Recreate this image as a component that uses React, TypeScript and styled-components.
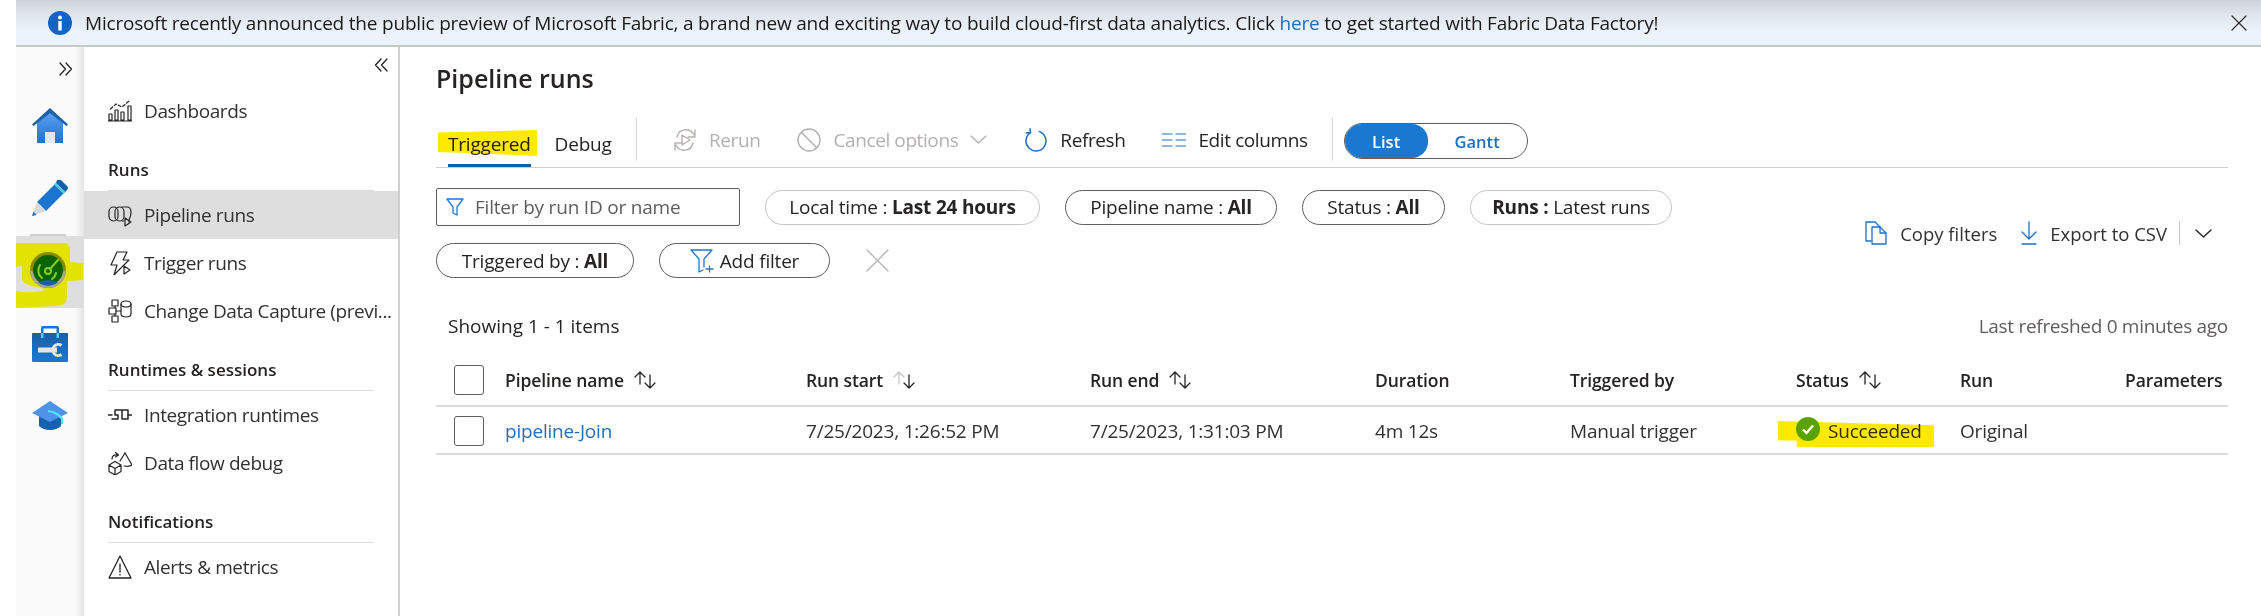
import { ReactNode } from "react";
import styled, { createGlobalStyle } from "styled-components";

const GlobalStyle = createGlobalStyle`
    html, body {
        margin: 0;
        padding: 0;
        background: #fff;
    }
    body {
        font-family: "Open Sans", "Noto Sans", "Liberation Sans", sans-serif;
        color: #252423;
    }
    * {
        box-sizing: border-box;
    }
`;

const Page = styled.div`
    width: 2261px;
    height: 616px;
    padding-left: 16px;
    display: flex;
    flex-direction: column;
    overflow: hidden;
    background: #fff;
`;

const Banner = styled.div`
    height: 47px;
    flex: none;
    display: flex;
    align-items: center;
    padding: 0 14px 0 32px;
    background: linear-gradient(#cdd2da 0, #dfe5ec 14px, #ebf3fc 32px);
    border-bottom: 2px solid #c8c8c8;
    font-size: 19px;
    letter-spacing: -0.2px;
`;

const BannerText = styled.div`
    flex: 1;
    margin-left: 13px;
    color: #1b1a19;
    white-space: nowrap;
`;

const BannerLink = styled.span`
    color: #1f6fc0;
`;

const Body = styled.div`
    flex: 1;
    display: flex;
    min-height: 0;
`;

const Rail = styled.nav`
    width: 68px;
    flex: none;
    background: linear-gradient(90deg, #fbfbfb 0, #fbfbfb 58px, #e6e6e6 68px);
`;

const RailHead = styled.div`
    height: 43px;
    display: flex;
    justify-content: flex-end;
    align-items: center;
    padding: 0 11px 0 0;
`;

const RailTile = styled.div`
    height: 72px;
    display: flex;
    align-items: center;
    justify-content: center;
`;

const RailRule = styled.div`
    height: 2px;
    width: 36px;
    margin-left: 14px;
    background: #cfcfcf;
`;

const ActiveTile = styled.div`
    height: 72px;
    display: block;
    background: #dedede;
`;

const Side = styled.aside`
    width: 316px;
    flex: none;
    border-right: 2px solid #d0d0d0;
    background: #fff;
`;

const SideHead = styled.div`
    height: 40px;
    display: flex;
    justify-content: flex-end;
    align-items: center;
    padding: 0 10px 4px 0;
`;

const SectionHead = styled.div`
    height: 40px;
    margin: 16px 24px 0;
    padding-bottom: 2px;
    display: flex;
    align-items: center;
    font-size: 17px;
    font-weight: 600;
    color: #252423;
    border-bottom: 1px solid #dcdcdc;
`;

const SideItem = styled.div<{ $active?: boolean }>`
    height: 48px;
    display: flex;
    align-items: center;
    gap: 12px;
    padding: 0 0 0 24px;
    font-size: 19px;
    letter-spacing: -0.4px;
    color: #323130;
    background: ${(p) => (p.$active ? "#dedede" : "transparent")};
`;

const ItemLabel = styled.span`
    white-space: nowrap;
`;

const Main = styled.main`
    flex: 1;
    min-width: 0;
    padding: 11px 33px 0 36px;
`;

const Title = styled.h1`
    margin: 0;
    height: 40px;
    display: flex;
    align-items: center;
    font-size: 25px;
    font-weight: 600;
    color: #252423;
`;

const TabBar = styled.div`
    margin-top: 20px;
    height: 50px;
    display: flex;
    align-items: stretch;
    border-bottom: 1px solid #d0d0d0;
`;

const Tabs = styled.div`
    display: flex;
    gap: 24px;
    padding-left: 12px;
    width: 200px;
`;

const Tab = styled.div<{ $active?: boolean }>`
    position: relative;
    height: 49px;
    padding-top: 13px;
    font-size: 19px;
    letter-spacing: -0.2px;
    color: #252423;
    border-bottom: 3px solid ${(p) => (p.$active ? "#1660a8" : "transparent")};
`;

const TabMarker = styled.span`
    position: absolute;
    left: -10px;
    top: 12px;
    width: 99px;
    height: 26px;
    background: #ffe900;
    mix-blend-mode: multiply;
    clip-path: polygon(0 10%, 100% 0, 100% 100%, 55% 92%, 0 85%);
`;

const Divider = styled.div`
    width: 1px;
    height: 43px;
    flex: none;
    background: #d6d6d6;
`;

const Tool = styled.div<{ $disabled?: boolean }>`
    display: flex;
    align-items: center;
    gap: 12px;
    height: 43px;
    font-size: 19px;
    letter-spacing: -0.4px;
    white-space: nowrap;
    color: ${(p) => (p.$disabled ? "#b4b2b0" : "#252423")};
`;

const ToolGroup = styled.div`
    display: flex;
    gap: 37px;
    padding-left: 36px;
    padding-right: 24px;
`;

const ViewToggle = styled.div`
    margin: 5px 0 0 11px;
    width: 184px;
    height: 36px;
    display: flex;
    border: 1px solid #605e5c;
    border-radius: 18px;
    font-size: 16.5px;
    font-weight: 600;
    overflow: hidden;
`;

const ToggleOption = styled.div<{ $on?: boolean }>`
    flex: ${(p) => (p.$on ? "0 0 83px" : "1")};
    display: flex;
    align-items: center;
    justify-content: center;
    border-radius: 0 16px 16px 0;
    background: ${(p) => (p.$on ? "#1b78d0" : "transparent")};
    color: ${(p) => (p.$on ? "#fff" : "#1f6fc0")};
`;

const FilterArea = styled.div`
    margin-top: 20px;
    display: flex;
    justify-content: space-between;
    align-items: center;
    height: 90px;
`;

const FilterLeft = styled.div`
    display: flex;
    flex-direction: column;
    gap: 17px;
`;

const FilterRow = styled.div`
    display: flex;
    align-items: center;
    gap: 25px;
`;

const SearchBox = styled.div`
    width: 304px;
    height: 38px;
    display: flex;
    align-items: center;
    gap: 11px;
    padding-left: 9px;
    border: 1px solid #605e5c;
    border-radius: 2px;
    font-size: 19px;
    letter-spacing: -0.2px;
    color: #605e5c;
`;

const Pill = styled.div<{ $soft?: boolean; $w: number }>`
    width: ${(p) => p.$w}px;
    height: 35px;
    display: flex;
    align-items: center;
    justify-content: center;
    gap: 6px;
    border: 1px solid ${(p) => (p.$soft ? "#c8c6c4" : "#605e5c")};
    border-radius: 18px;
    font-size: 19px;
    letter-spacing: -0.2px;
    white-space: pre;
    color: #252423;

    b {
        font-weight: 700;
    }
`;

const ClearButton = styled.div`
    width: 45px;
    height: 35px;
    display: flex;
    align-items: center;
    justify-content: center;
`;

const Actions = styled.div`
    display: flex;
    align-items: center;
    padding-right: 16px;
    font-size: 18.5px;
    color: #323130;
`;

const Action = styled.div`
    display: flex;
    align-items: center;
    gap: 13px;
    margin-right: 24px;
    white-space: nowrap;
`;

const ActionRule = styled.div`
    width: 1px;
    height: 24px;
    margin: 0 15px 0 -12px;
    background: #c8c6c4;
`;

const InfoRow = styled.div`
    margin-top: 36px;
    display: flex;
    justify-content: space-between;
    align-items: center;
    padding-left: 12px;
    font-size: 19px;
    height: 24px;
`;

const Refreshed = styled.span`
    color: #605e5c;
    letter-spacing: -0.3px;
`;

const TableRow = styled.div<{ $head?: boolean }>`
    display: grid;
    grid-template-columns: 69px 301px 284px 285px 195px 226px 164px 165px 103px;
    align-items: center;
    height: ${(p) => (p.$head ? 69 : 48)}px;
    padding-top: ${(p) => (p.$head ? 16 : 2)}px;
    border-bottom: 2px solid #dcdcdc;
    font-size: 19px;
    letter-spacing: -0.2px;
    color: #323130;
`;

const HeadCell = styled.div`
    display: flex;
    align-items: center;
    gap: 10px;
    font-weight: 600;
    font-size: 17.5px;
    letter-spacing: -0.1px;
    color: #252423;
    white-space: nowrap;
`;

const Cell = styled.div`
    position: relative;
    display: flex;
    align-items: center;
    gap: 8px;
    white-space: nowrap;
`;

const CheckBox = styled.div`
    width: 30px;
    height: 30px;
    margin-left: 18px;
    border: 1px solid #605e5c;
    border-radius: 3px;
`;

const PipeLink = styled.span`
    color: #1f6fc0;
`;

const StatusMarker = styled.span`
    position: absolute;
    left: -18px;
    top: 3px;
    width: 156px;
    height: 26px;
    background: #ffe900;
    mix-blend-mode: multiply;
    clip-path: polygon(0 0, 100% 16%, 100% 100%, 12% 100%, 12% 75%, 0 75%);
`;

function Ic({ size = 24, w, h, children, color = "#252423", sw = 1.4 }: { size?: number; w?: number; h?: number; children: ReactNode; color?: string; sw?: number }) {
    const vw = w || size;
    const vh = h || size;
    return (
        <svg width={vw} height={vh} viewBox={`0 0 ${vw} ${vh}`} fill="none" stroke={color} strokeWidth={sw} strokeLinecap="round" strokeLinejoin="round" style={{ flex: "none", display: "block" }}>
            {children}
        </svg>
    );
}

const HomeIcon = () => (
    <svg width="36" height="36" viewBox="0 0 36 36">
        <defs>
            <linearGradient id="homeBody" x1="0" y1="0" x2="0" y2="1">
                <stop offset="0" stopColor="#5ea0ef" />
                <stop offset="1" stopColor="#1b74d0" />
            </linearGradient>
        </defs>
        <path d="M18 3 5 15v20h26V15z" fill="url(#homeBody)" />
        <path d="M18 0 0 16.500 1.500 18 18 5l16.500 13L36 16.500z" fill="#1b5fa8" />
        <rect x="13" y="24" width="10" height="11" fill="#e6e6e6" />
    </svg>
);

const PencilIcon = () => (
    <svg width="36" height="36" viewBox="0 0 36 36">
        <path d="M5 22 25 2l9 9-20 20z" fill="#1b74d0" />
        <path d="M25 0q2-1 4 0l6 6q2 2 0 4l-2 2-9-9z" fill="#1660a8" />
        <path d="M22 4.500l2-2 9.500 9.500-2 2z" fill="#5cc8e8" />
        <path d="M5 22l9 9-14 5z" fill="#d9d9d9" />
        <path d="M1.500 31.500 4.500 35 0 36z" fill="#1b74d0" />
    </svg>
);

const RadarTile = () => (
    <svg width="68" height="72" viewBox="0 0 68 72" style={{ display: "block" }}>
        <path d="M0 7h49q5 1 5 7v12l13 1v17l-16 1v17q-1 8-11 8L0 72z" fill="#e3e300" />
        <path d="M0 31l6-1v14q4 6 16 7l8 3q-16 4-30 1z" fill="#dedede" />
        <circle cx="32" cy="34" r="18" fill="#8b8b00" />
        <path d="M14 34a18 18 0 0 0 36 0q-18 12-36 0z" fill="#a9a98a" />
        <circle cx="32" cy="34" r="15" fill="#0d6200" />
        <path d="M22 46a15 15 0 0 0 20 0q-10-4-20 0z" fill="#1b5fa8" />
        <g fill="none" stroke="#7ed321" strokeWidth="2" strokeLinecap="round">
            <path d="M26 42a9.500 9.500 0 0 1-2-13" />
            <path d="M40 37a9 9 0 0 1-4 6" />
            <circle cx="32" cy="35" r="3" />
            <path d="M34 33l8-9" />
        </g>
    </svg>
);

const ToolboxIcon = () => (
    <svg width="36" height="36" viewBox="0 0 36 36">
        <defs>
            <linearGradient id="boxBody" x1="0" y1="0" x2="0" y2="1">
                <stop offset="0" stopColor="#1660a8" />
                <stop offset="1" stopColor="#1b78d0" />
            </linearGradient>
        </defs>
        <path d="M9 8V2Q9 0 11 0h14q2 0 2 2v6h-2.500V2.500h-13V8z" fill="#1b74d0" />
        <rect x="0" y="7" width="36" height="29" rx="1" fill="url(#boxBody)" />
        <rect x="9" y="7" width="2.500" height="5" fill="#50d0f0" />
        <rect x="24.500" y="7" width="2.500" height="5" fill="#50d0f0" />
        <rect x="6" y="21.500" width="19" height="5" fill="#e3e3e3" />
        <path d="M29.500 19.500a5.500 5.500 0 1 0 0 9" fill="none" stroke="#e3e3e3" strokeWidth="3" />
    </svg>
);

const HatIcon = () => (
    <svg width="36" height="30" viewBox="0 0 36 30">
        <path d="M7 13h22v12q-4 4-11 4T7 25z" fill="#1660b0" />
        <path d="M18 0 36 12 18 21 0 12z" fill="#4f93e8" />
        <path d="M16 9q10 1 15 8v6h-2v-5q-5-6-13-7z" fill="#50e6ff" />
    </svg>
);

const Chevrons = ({ left }: { left?: boolean }) => (
    <Ic size={14} sw={1.3} color="#252423">
        {left ? <path d="M7 1 1.500 7 7 13M13 1 7.500 7 13 13" /> : <path d="M1 1l5.500 6L1 13M7 1l5.500 6L7 13" />}
    </Ic>
);

const CloseIcon = ({ size = 16, color = "#323130" }: { size?: number; color?: string }) => (
    <Ic size={size} color={color} sw={1.3}>
        <path d={`M1 1 ${size - 1} ${size - 1}M${size - 1} 1 1 ${size - 1}`} />
    </Ic>
);

const InfoIcon = () => (
    <svg width="24" height="24" viewBox="0 0 24 24" style={{ flex: "none" }}>
        <circle cx="12" cy="12" r="12" fill="#1464c8" />
        <circle cx="12" cy="6.500" r="2" fill="#fff" />
        <rect x="10.300" y="10" width="3.400" height="9.500" fill="#fff" />
    </svg>
);

const DashIcon = () => (
    <Ic size={24} sw={1.2}>
        <path d="M1 21v-6h3v6zM7 21V11h3v10zM13 21v-8h3v8zM20 21V7h3v14zM0 22h24" />
        <path d="M2.500 10 8 5l6 3 7-6" strokeDasharray="3 2" />
    </Ic>
);

const PipeIcon = () => (
    <Ic size={24} sw={1.2}>
        <rect x="1" y="4" width="9" height="14" rx="4.500" />
        <rect x="7" y="4" width="9" height="14" rx="4.500" />
        <path d="M14 4h5q4 0 4 5 0 4-2 8v2M14 18l2 0" />
        <path d="M17 15v8l6-4z" />
    </Ic>
);

const TriggerIcon = () => (
    <Ic size={24} sw={1.2}>
        <path d="M9 1h10l-4 8h6L6 24l3-10H3z" />
        <path d="M16 15v8l6-4z" fill="#fff" />
    </Ic>
);

const CaptureIcon = () => (
    <Ic size={24} sw={1.2}>
        <rect x="1" y="9" width="7" height="6" />
        <rect x="4" y="1" width="6" height="6" />
        <rect x="4" y="17" width="6" height="6" />
        <path d="M8 12h5M7 7v2M7 15v2" />
        <ellipse cx="18" cy="5" rx="5" ry="3" />
        <path d="M13 5v10q0 3 5 3t5-3V5" />
    </Ic>
);

const IntegrationIcon = () => (
    <Ic size={24} sw={1.5}>
        <path d="M0 12h4M20 12h4" />
        <path d="M4 16h6v-4H7V7h7v9h6V7h-6" />
    </Ic>
);

const DebugIcon = () => (
    <Ic size={24} sw={1.2}>
        <path d="M1 14l6-3.500 6 3.500v6.500L7 24l-6-3.500zM1 14l6 3.500 6-3.500M7 17.500V24" />
        <path d="M4 8q0-5 6-4M7.500 1.500 10.500 4 7.500 6" />
        <path d="M17 2l7 12q-2 2-8 1" />
        <path d="M17 2l-5 8" />
    </Ic>
);

const AlertIcon = () => (
    <Ic size={24} sw={1.3}>
        <path d="M12 1 1 23h22z" />
        <path d="M12 9v8M12 19.500v.5" />
    </Ic>
);

const RerunIcon = ({ color }: { color: string }) => (
    <Ic size={24} color={color} sw={1.4}>
        <path d="M22 2v7h-7M2 22v-7h7" />
        <path d="M4 9a9 9 0 0 1 17-2M20 15a9 9 0 0 1-17 2" />
        <path d="M9 7v10l8-5z" />
    </Ic>
);

const BanIcon = ({ color }: { color: string }) => (
    <Ic size={24} color={color} sw={1.4}>
        <circle cx="12" cy="12" r="11" />
        <path d="M4.500 4.500l15 15" />
    </Ic>
);

const ChevronDown = ({ w = 17, h = 9, color = "#252423" }: { w?: number; h?: number; color?: string }) => (
    <Ic w={w} h={h} color={color} sw={1.4}>
        <path d={`M1 1 ${w / 2} ${h - 1} ${w - 1} 1`} />
    </Ic>
);

const RefreshIcon = () => (
    <Ic size={24} color="#1f6fc0" sw={1.5}>
        <path d="M15.500 3.600A10 10 0 1 1 6.500 4.600" />
        <path d="M6 0.800l.5 3.800-4 .5" />
    </Ic>
);

const ColumnsIcon = () => (
    <Ic w={24} h={16} color="#1f6fc0" sw={1.2}>
        <path d="M0 2h10M0 8h10M0 14h10M14 2h10M14 8h10M14 14h10" />
    </Ic>
);

const FilterIcon = ({ size = 18 }: { size?: number }) => (
    <Ic size={size} color="#1f78d0" sw={1.3}>
        <path d={`M1 1h${size - 2}l-${size / 2 - 3} ${size / 2 - 1}v${size / 2 - 1}l-4-2v-${size / 2 - 3}z`} />
    </Ic>
);

const AddFilterIcon = () => (
    <Ic size={24} color="#1f78d0" sw={1.3}>
        <path d="M1 1h21l-8 9v8M1 1l8 9v13l4-2" />
        <path d="M16 20h7M19.500 17v6" />
    </Ic>
);

const CopyIcon = () => (
    <Ic w={22} h={24} color="#1f6fc0" sw={1.3}>
        <path d="M6 20H1V1h9l5 5" />
        <path d="M7 6h8l6 6v11H7z" />
        <path d="M15 6v6h6" />
    </Ic>
);

const ExportIcon = () => (
    <Ic w={16} h={24} color="#1f6fc0" sw={1.3}>
        <path d="M8 1v17M1 11l7 7 7-7M1 23h14" />
    </Ic>
);

const SortIcon = ({ faint }: { faint?: boolean }) => (
    <Ic w={22} h={18} sw={1.3}>
        <path d="M6 13V1M1 6l5-5 5 5" stroke={faint ? "#c8c6c4" : "#252423"} />
        <path d="M16 4v13M11 12l5 5 5-5" />
    </Ic>
);

const SuccessIcon = () => (
    <svg width="24" height="24" viewBox="0 0 24 24" style={{ flex: "none", position: "relative", marginTop: -4 }}>
        <circle cx="12" cy="12" r="12" fill="#5ba300" />
        <path d="M7 12.500l3.500 3.500L17 8.500" fill="none" stroke="#fff" strokeWidth="2.400" />
    </svg>
);

const columns = [
    { label: "Pipeline name", sort: true },
    { label: "Run start", sort: true, faint: true },
    { label: "Run end", sort: true },
    { label: "Duration" },
    { label: "Triggered by" },
    { label: "Status", sort: true },
    { label: "Run" },
    { label: "Parameters" },
];

export default function App() {
    return (
        <Page>
            <GlobalStyle />
            <Banner>
                <InfoIcon />
                <BannerText>
                    Microsoft recently announced the public preview of Microsoft Fabric, a brand new and exciting way to build cloud-first data analytics. Click <BannerLink>here</BannerLink> to get started with Fabric Data Factory!
                </BannerText>
                <CloseIcon />
            </Banner>
            <Body>
                <Rail>
                    <RailHead><Chevrons /></RailHead>
                    <RailTile><HomeIcon /></RailTile>
                    <RailTile><PencilIcon /></RailTile>
                    <RailRule />
                    <ActiveTile><RadarTile /></ActiveTile>
                    <RailTile><ToolboxIcon /></RailTile>
                    <RailTile><HatIcon /></RailTile>
                </Rail>
                <Side>
                    <SideHead><Chevrons left /></SideHead>
                    <SideItem><DashIcon /><ItemLabel>Dashboards</ItemLabel></SideItem>
                    <SectionHead>Runs</SectionHead>
                    <SideItem $active><PipeIcon /><ItemLabel>Pipeline runs</ItemLabel></SideItem>
                    <SideItem><TriggerIcon /><ItemLabel>Trigger runs</ItemLabel></SideItem>
                    <SideItem><CaptureIcon /><ItemLabel>Change Data Capture (previ...</ItemLabel></SideItem>
                    <SectionHead>Runtimes &amp; sessions</SectionHead>
                    <SideItem><IntegrationIcon /><ItemLabel>Integration runtimes</ItemLabel></SideItem>
                    <SideItem><DebugIcon /><ItemLabel>Data flow debug</ItemLabel></SideItem>
                    <SectionHead>Notifications</SectionHead>
                    <SideItem><AlertIcon /><ItemLabel>Alerts &amp; metrics</ItemLabel></SideItem>
                </Side>
                <Main>
                    <Title>Pipeline runs</Title>
                    <TabBar>
                        <Tabs>
                            <Tab $active><TabMarker />Triggered</Tab>
                            <Tab>Debug</Tab>
                        </Tabs>
                        <Divider />
                        <ToolGroup>
                            <Tool $disabled><RerunIcon color="#b4b2b0" />Rerun</Tool>
                            <Tool $disabled><BanIcon color="#b4b2b0" />Cancel options<ChevronDown color="#b4b2b0" /></Tool>
                            <Tool><RefreshIcon />Refresh</Tool>
                            <Tool><ColumnsIcon />Edit columns</Tool>
                        </ToolGroup>
                        <Divider />
                        <ViewToggle>
                            <ToggleOption $on>List</ToggleOption>
                            <ToggleOption>Gantt</ToggleOption>
                        </ViewToggle>
                    </TabBar>
                    <FilterArea>
                        <FilterLeft>
                            <FilterRow>
                                <SearchBox><FilterIcon />Filter by run ID or name</SearchBox>
                                <Pill $soft $w={275}><span>Local time : <b>Last 24 hours</b></span></Pill>
                                <Pill $w={212}><span>Pipeline name : <b>All</b></span></Pill>
                                <Pill $w={143}><span>Status : <b>All</b></span></Pill>
                                <Pill $soft $w={202}><span><b>Runs :</b> Latest runs</span></Pill>
                            </FilterRow>
                            <FilterRow>
                                <Pill $w={198}><span>Triggered by : <b>All</b></span></Pill>
                                <Pill $w={171}><AddFilterIcon />Add filter</Pill>
                                <ClearButton><CloseIcon size={23} color="#b4b2b0" /></ClearButton>
                            </FilterRow>
                        </FilterLeft>
                        <Actions>
                            <Action><CopyIcon />Copy filters</Action>
                            <Action><ExportIcon />Export to CSV</Action>
                            <ActionRule />
                            <ChevronDown />
                        </Actions>
                    </FilterArea>
                    <InfoRow>
                        <span>Showing 1 - 1 items</span>
                        <Refreshed>Last refreshed 0 minutes ago</Refreshed>
                    </InfoRow>
                    <TableRow $head>
                        <CheckBox />
                        {columns.map((c) => (
                            <HeadCell key={c.label}>{c.label}{c.sort && <SortIcon faint={c.faint} />}</HeadCell>
                        ))}
                    </TableRow>
                    <TableRow>
                        <CheckBox />
                        <Cell><PipeLink>pipeline-Join</PipeLink></Cell>
                        <Cell>7/25/2023, 1:26:52 PM</Cell>
                        <Cell>7/25/2023, 1:31:03 PM</Cell>
                        <Cell>4m 12s</Cell>
                        <Cell>Manual trigger</Cell>
                        <Cell><StatusMarker /><SuccessIcon />Succeeded</Cell>
                        <Cell>Original</Cell>
                        <Cell />
                    </TableRow>
                </Main>
            </Body>
        </Page>
    );
}
